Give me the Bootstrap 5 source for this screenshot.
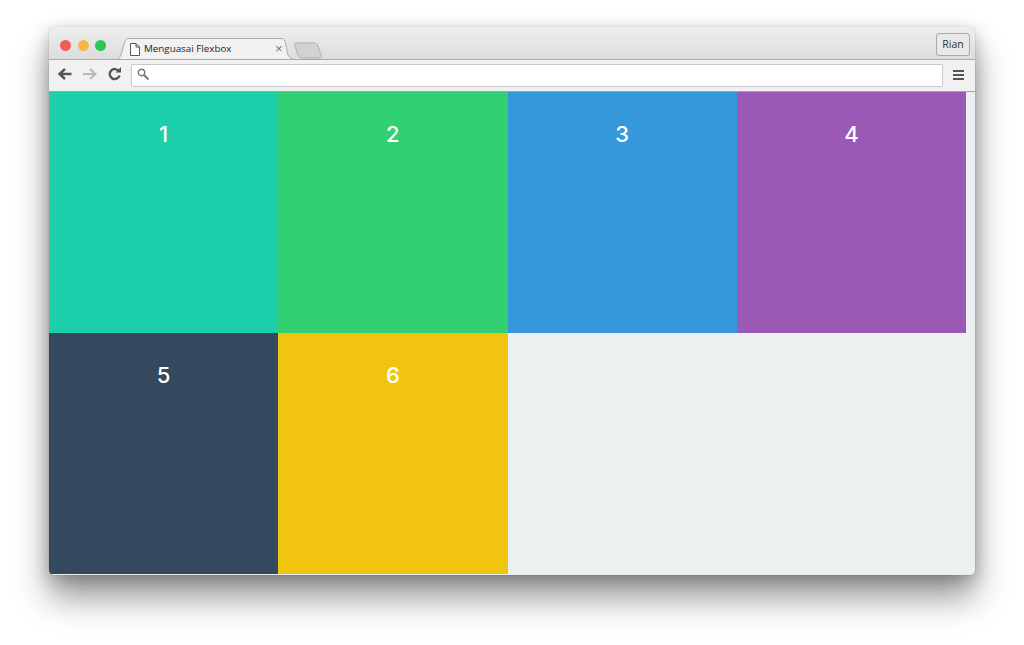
<!DOCTYPE html>
<html lang="id">
<head>
<meta charset="utf-8">
<title>Menguasai Flexbox</title>
<link href="https://cdn.jsdelivr.net/npm/bootstrap@5.3.0/dist/css/bootstrap.min.css" rel="stylesheet">
<style>
html,body{height:100%;overflow:hidden;background:#fff}
body{padding:27px 49px 70px;font-family:"Liberation Sans",sans-serif}
.win{width:926px;height:548px;border-radius:5px;background:#ecf0f1;overflow:hidden;box-shadow:0 0 1px rgba(0,0,0,.45)}
.win-shadow{width:926px;height:548px;border-radius:5px;box-shadow:0 22px 34px rgba(0,0,0,.42),0 4px 16px rgba(0,0,0,.22)}
.titlebar{height:33px;background:linear-gradient(#eeeeee,#dcdcdc);border-top:1px solid #f5f5f5;border-bottom:1px solid #a9a9a9}
.lights{padding:12px 0 0 11px;gap:6.5px;width:67px;flex:none}
.light{width:11px;height:11px;border-radius:50%;flex:none}
.l-red{background:#f25c57}.l-amber{background:#f6b844}.l-green{background:#2bc655}
.tabwrap{width:178px;height:22px;margin-top:10px;flex:none}
.tabshape{position:absolute;left:0;top:0}
.tabtext{position:absolute;left:14px;top:3px;font:9.8px/16px "Open Sans",sans-serif;color:#222;white-space:nowrap;display:flex;gap:4px;align-items:center}
.tabx{position:absolute;left:159px;top:3px;font-size:13px;line-height:16px;color:#777}
.newtab{margin:14px 0 0 -1px;flex:none}
.userbtn{margin:5px 5px 0 auto;width:34px;height:23px;border:1px solid #a9a9a9;border-radius:3px;background:#e9e9e9;font:10.5px/21px "Open Sans",sans-serif;color:#333;text-align:center;padding:0}
.toolbar{height:32px;background:#f1f1f1;border-bottom:1px solid #a4a4a4;padding:4px 0 4px 8px}
.navgap{gap:9px;width:74px;flex:none;padding-top:3px}
.omni{width:812px;height:23px;background:#fff;border:1px solid #c9c9c9;border-radius:2px;padding:3px 0 0 5px;flex:none}
.burger{margin:6px 0 0 10px;flex:none}
.burger i{display:block;width:11px;height:2px;background:#555;margin-bottom:2px}
.pagearea{height:482px;padding-right:9px}
.tile{width:25%;height:241px;color:#fff;font:500 22px/1 "Inter",sans-serif;text-align:center;padding-top:31px}
.c1{background:#1bd0ab}.c2{background:#31d073}.c3{background:#3498db}.c4{background:#9b59b6}.c5{background:#34495e}.c6{background:#f1c40f}
</style>
</head>
<body>
<div class="win-shadow">
<div class="win">
  <div class="titlebar d-flex">
    <div class="lights d-flex"><span class="light l-red"></span><span class="light l-amber"></span><span class="light l-green"></span></div>
    <div class="tabwrap position-relative">
      <svg class="tabshape" width="178" height="22" viewBox="0 0 178 22"><path d="M0 21.500C3 21 4 19 5 17L9 3C10 1 11 .5 13 .5H165C167 .5 168 1 169 3L172 17C173 19 175 21 178 21.500Z" fill="#f1f1f1" stroke="#a9a9a9"/></svg>
      <div class="tabtext"><svg width="10" height="13" viewBox="0 0 10 13"><path d="M.5.5H6L9.500 4V12.500H.5ZM6 .5V4H9.500" fill="#fff" stroke="#555"/></svg><span>Menguasai Flexbox</span></div>
      <span class="tabx">×</span>
    </div>
    <svg class="newtab" width="30" height="17" viewBox="0 0 30 17"><path d="M3 1H21C23 1 24 2 25 4L28 13C29 15 28 16 26 16H9C7 16 6 15 5 13L2 4C1 2 1 1 3 1Z" fill="#d2d2d2" stroke="#b0b0b0"/></svg>
    <button type="button" class="userbtn">Rian</button>
  </div>
  <div class="toolbar d-flex">
    <div class="navgap d-flex">
      <svg width="16" height="14" viewBox="0 0 16 14"><path d="M14.500 7H3M8 2 2.500 7 8 12" fill="none" stroke="#555" stroke-width="2.400"/></svg>
      <svg width="16" height="14" viewBox="0 0 16 14"><path d="M1 7H12.500M8 2 13.500 7 8 12" fill="none" stroke="#b8b8b8" stroke-width="2"/></svg>
      <svg width="15" height="14" viewBox="0 0 15 14"><path d="M12 4.500A5 5 0 1 0 12.500 8.500" fill="none" stroke="#555" stroke-width="2.400"/><path d="M8.500 5.500H14V0Z" fill="#555"/></svg>
    </div>
    <div class="omni"><svg class="d-block" width="13" height="13" viewBox="0 0 13 13"><circle cx="4.500" cy="4.500" r="3.200" fill="none" stroke="#777" stroke-width="1.400"/><path d="M7 7 11.500 11.500" stroke="#777" stroke-width="2"/></svg></div>
    <div class="burger"><i></i><i></i><i></i></div>
  </div>
  <div class="pagearea d-flex flex-wrap align-content-start">
    <div class="tile c1">1</div>
    <div class="tile c2">2</div>
    <div class="tile c3">3</div>
    <div class="tile c4">4</div>
    <div class="tile c5">5</div>
    <div class="tile c6">6</div>
  </div>
</div>
</div>
</body>
</html>
